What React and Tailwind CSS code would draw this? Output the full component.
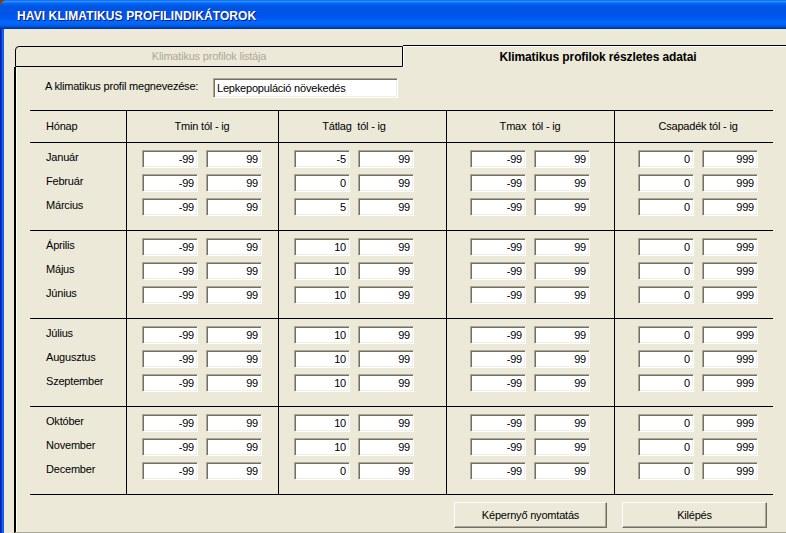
import React from "react";

const groups = [
  [
    ["Január", -99, 99, -5, 99, -99, 99, 0, 999],
    ["Február", -99, 99, 0, 99, -99, 99, 0, 999],
    ["Március", -99, 99, 5, 99, -99, 99, 0, 999],
  ],
  [
    ["Április", -99, 99, 10, 99, -99, 99, 0, 999],
    ["Május", -99, 99, 10, 99, -99, 99, 0, 999],
    ["Június", -99, 99, 10, 99, -99, 99, 0, 999],
  ],
  [
    ["Július", -99, 99, 10, 99, -99, 99, 0, 999],
    ["Augusztus", -99, 99, 10, 99, -99, 99, 0, 999],
    ["Szeptember", -99, 99, 10, 99, -99, 99, 0, 999],
  ],
  [
    ["Október", -99, 99, 10, 99, -99, 99, 0, 999],
    ["November", -99, 99, 10, 99, -99, 99, 0, 999],
    ["December", -99, 99, 0, 99, -99, 99, 0, 999],
  ],
];

const colPad = ["pl-[15px]", "pl-[15px]", "pl-[23px]", "pl-[23px]"];
const headers = ["Tmin tól - ig", "Tátlag  tól - ig", "Tmax  tól - ig", "Csapadék tól - ig"];

function Field({ v }) {
  return (
    <div className="w-[56px] h-[18px] bg-white border border-t-[#aca899] border-l-[#aca899] border-b-white border-r-white shadow-[inset_1px_1px_0_#716f64,inset_-1px_-1px_0_#f1efe2] flex items-center justify-end pr-[3px] text-[11px] leading-none text-black">
      {v}
    </div>
  );
}

function Btn({ children, w }) {
  return (
    <div
      className={`${w} h-[26px] flex items-center justify-center border border-t-white border-l-white border-b-[#716f64] border-r-[#716f64] shadow-[inset_-1px_-1px_0_#aca899] bg-[#ece9d8] text-[11px] text-black`}
    >
      {children}
    </div>
  );
}

const gridCols = "grid grid-cols-[97px_152px_168px_168px_158px]";

export default function App() {
  return (
    <div className="w-[786px] h-[533px] overflow-hidden bg-[#7a3f12] flex flex-col font-['Liberation_Sans',Arial,sans-serif] tracking-[-0.2px]">
      {/* Title bar */}
      <div className="h-[29px] shrink-0 rounded-tl-[7px] bg-[linear-gradient(to_bottom,#0058ee_0%,#3593ff_4%,#288eff_6%,#127dff_8%,#036ffc_10%,#0262ee_14%,#0057e5_20%,#0054e3_24%,#0055eb_56%,#005bf5_66%,#026afe_76%,#0062ef_86%,#0052d6_92%,#0040ab_96%,#003092_100%)] flex items-center pl-[17px] pt-[3px]">
        <span className="text-white font-bold text-[12px] tracking-[0.1px] text-shadow-[1px_1px_0_#0a1a70]">
          HAVI KLIMATIKUS PROFILINDIKÁTOROK
        </span>
      </div>

      <div className="flex flex-1 min-h-0">
        {/* Left frame */}
        <div className="w-[4px] shrink-0 bg-[linear-gradient(to_right,#00138c,#0831d9,#166aee,#0855dd)]" />

        {/* Client area */}
        <div className="flex-1 bg-[#ece9d8] pl-[10px] pt-[16px] flex flex-col min-w-0 overflow-hidden">
          {/* Tabs */}
          <div className="h-[22px] flex items-end shrink-0">
            <div className="w-[388px] shrink-0 ml-[1px] h-[21px] border-t border-l border-r border-b border-black rounded-tl-[4px] flex items-center justify-center text-[11px] text-[#aca899]">
              Klimatikus profilok listája
            </div>
            <div className="w-[390px] shrink-0 h-[22px] border-t border-black shadow-[inset_1px_1px_0_#fff] flex items-center justify-center pt-[1px] text-[12px] font-bold tracking-[-0.1px] text-black">
              Klimatikus profilok részletes adatai
            </div>
          </div>

          {/* Panel */}
          <div className="flex-1 border-l-2 border-black border-b border-b-[#aca899] shadow-[inset_1px_0_0_#fff] pl-[14px] pt-[11px] flex flex-col">
            {/* Name row */}
            <div className="flex items-center h-[20px]">
              <div className="ml-[15px] w-[168px] text-[11px] text-black -mt-[3px]">
                A klimatikus profil megnevezése:
              </div>
              <div className="w-[185px] h-[20px] bg-white border border-t-[#aca899] border-l-[#aca899] border-b-white border-r-white shadow-[inset_1px_1px_0_#716f64,inset_-1px_-1px_0_#f1efe2] flex items-center pl-[3px] text-[11px] text-black">
                Lepkepopuláció növekedés
              </div>
            </div>

            {/* Table */}
            <div className="mt-[12px] w-[743px] border-t border-black text-[11px] text-black">
              <div className={`${gridCols} h-[32px] border-b border-black`}>
                <div className="border-r border-black flex items-center pl-[16px]">Hónap</div>
                {headers.map((h, i) => (
                  <div
                    key={h}
                    className={`${i < 3 ? "border-r border-black" : ""} ${colPad[i]} flex items-center`}
                  >
                    <div className="w-[120px] text-center whitespace-pre">{h}</div>
                  </div>
                ))}
              </div>

              {groups.map((g, gi) => (
                <div key={gi} className={`${gridCols} h-[88px] border-b border-black`}>
                  <div className="border-r border-black flex flex-col pl-[16px] pt-[5px] gap-[6px]">
                    {g.map((r) => (
                      <div key={r[0]} className="h-[18px] leading-[18px]">
                        {r[0]}
                      </div>
                    ))}
                  </div>
                  {[0, 1, 2, 3].map((c) => (
                    <div
                      key={c}
                      className={`${c < 3 ? "border-r border-black" : ""} ${colPad[c]} pt-[7px] flex flex-col gap-[6px]`}
                    >
                      {g.map((r) => (
                        <div key={r[0]} className="flex gap-[8px]">
                          <Field v={r[1 + c * 2]} />
                          <Field v={r[2 + c * 2]} />
                        </div>
                      ))}
                    </div>
                  ))}
                </div>
              ))}
            </div>

            {/* Buttons */}
            <div className="mt-[7px] w-[743px] flex justify-end gap-[15px] pr-[6px]">
              <Btn w="w-[153px]">Képernyő nyomtatás</Btn>
              <Btn w="w-[145px]">Kilépés</Btn>
            </div>
          </div>
        </div>
      </div>
    </div>
  );
}
